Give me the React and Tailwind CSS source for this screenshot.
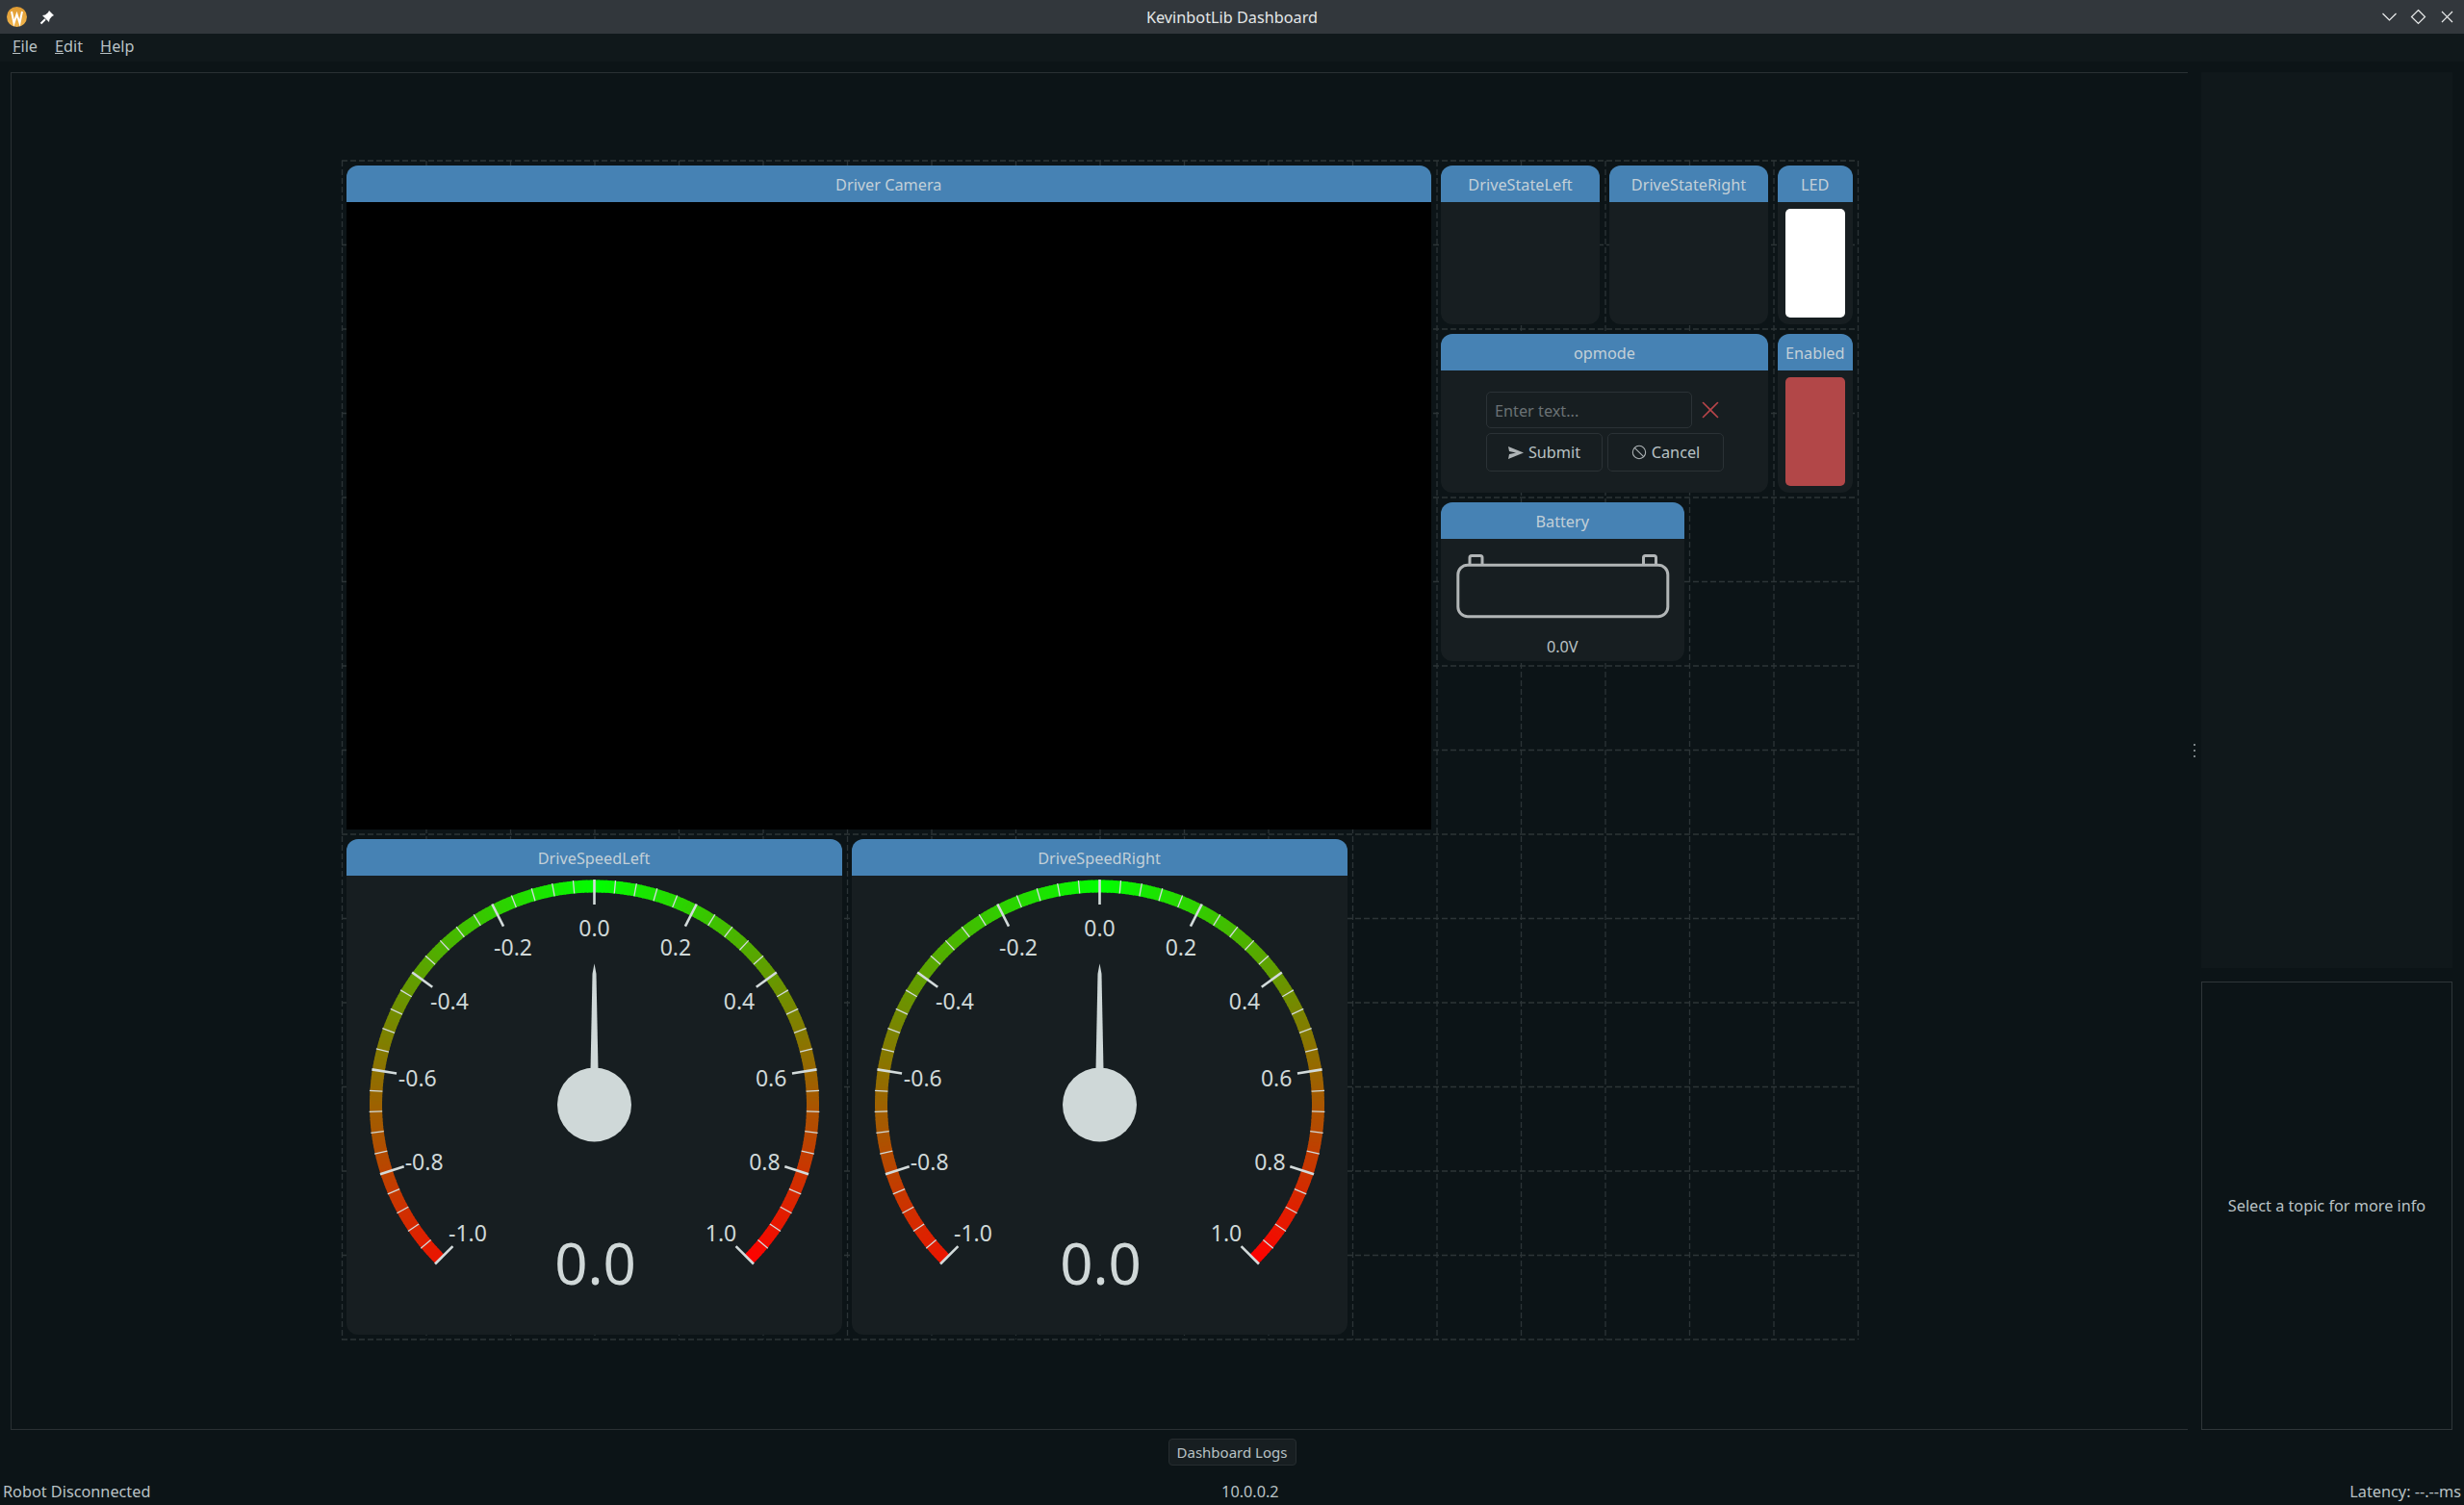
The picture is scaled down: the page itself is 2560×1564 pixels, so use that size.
import React from "react";
import { X, Ban } from "lucide-react";

const CELL = 87.5;

function GridLines() {
  const v = Array.from({ length: 19 }, (_, i) => i);
  const h = Array.from({ length: 15 }, (_, i) => i);
  return (
    <svg className="absolute left-0 top-0 overflow-visible" width="1575" height="1225">
      {v.map((i) => (
        <line key={"v" + i} x1={i * CELL + 0.5} x2={i * CELL + 0.5} y1="0" y2="1225" stroke="#2c3437" strokeWidth="1.3" strokeDasharray="6 3" />
      ))}
      {h.map((i) => (
        <line key={"h" + i} y1={i * CELL} y2={i * CELL} x1="0" x2="1575" stroke="#2c3437" strokeWidth="1.3" strokeDasharray="6 3" />
      ))}
    </svg>
  );
}

function Widget({ title, className, bodyClass = "", square = false, children }) {
  return (
    <div className={`relative m-[5px] flex min-w-0 flex-col overflow-hidden bg-[#171e21] ${square ? "rounded-t-[12px]" : "rounded-[12px]"} ${className}`}>
      <div className="flex h-[38px] shrink-0 items-center justify-center bg-[#4682b4] pt-[2px] text-[#c3d0d8]">{title}</div>
      <div className={`min-h-0 flex-1 ${bodyClass}`}>{children}</div>
    </div>
  );
}

const CX = 257.5;
const CY = 238;

function polar(r, deg) {
  const a = (deg * Math.PI) / 180;
  return [CX + r * Math.sin(a), CY - r * Math.cos(a)];
}

function arcColor(deg) {
  const v = deg / 135;
  const t = v < 0 ? Math.min(1, -v * 0.91 + 0.005) : v;
  const r = Math.round(255 * t);
  const g = Math.round(255 * (1 - t));
  return `rgb(${r},${g},0)`;
}

function Gauge() {
  const segs = [];
  for (let d = -135; d < 135; d += 1) {
    const [x1, y1] = polar(227, d);
    const [x2, y2] = polar(227, Math.min(135, d + 1.25));
    segs.push(<path key={d} d={`M${x1} ${y1} L${x2} ${y2}`} stroke={arcColor(d)} strokeWidth="13" fill="none" />);
  }
  const ticks = [];
  for (let i = -25; i <= 25; i += 1) {
    const d = (i * 135) / 25;
    const major = i % 5 === 0;
    const [x1, y1] = polar(234, d);
    const [x2, y2] = polar(major ? 208 : 220.5, d);
    ticks.push(<line key={i} x1={x1} y1={y1} x2={x2} y2={y2} stroke="#d3dbdb" strokeWidth={major ? 2.6 : 1.3} />);
  }
  const labels = [-1, -0.8, -0.6, -0.4, -0.2, 0, 0.2, 0.4, 0.6, 0.8, 1].map((v) => {
    const [x, y] = polar(186, v * 135);
    return (
      <text key={v} x={x} y={y + 10.5} textAnchor="middle" fontSize="23" fill="#cfd8d8">
        {v.toFixed(1)}
      </text>
    );
  });
  return (
    <svg width="515" height="477" className="block">
      {segs}
      {ticks}
      {labels}
      <polygon points="257.5,91.5 259.5,102 261.5,202 253.5,202 255.5,102" fill="#cfd8d8" />
      <circle cx={CX} cy={CY} r="38.5" fill="#cfd8d8" />
      <text x="258.6" y="425" textAnchor="middle" fontSize="60" fill="#d0d8d8">
        0.0
      </text>
    </svg>
  );
}

function Battery() {
  return (
    <svg width="253" height="95" className="block">
      <rect x="30" y="17.5" width="13" height="12" rx="2" fill="none" stroke="#b1b5b6" strokeWidth="3" />
      <rect x="210.5" y="17.5" width="13" height="12" rx="2" fill="none" stroke="#b1b5b6" strokeWidth="3" />
      <rect x="17.8" y="27.2" width="218" height="53.5" rx="10" fill="#171e21" stroke="#b1b5b6" strokeWidth="3" />
    </svg>
  );
}

export default function App() {
  return (
    <div className="flex h-[1564px] w-[2560px] flex-col overflow-hidden bg-[#0c1417] font-['Noto_Sans',sans-serif] text-[16.25px] text-[#b9c2c5]">
      {/* title bar */}
      <div className="relative flex h-[35px] shrink-0 items-center justify-center bg-[#32373c] pt-[1px] text-[#e4e7e8]">
        <div className="absolute left-[7px] top-[7px] flex items-center gap-[13px]">
          <svg width="21" height="21" viewBox="0 0 21 21">
            <defs>
              <linearGradient id="wl" x1="0" y1="0" x2="0" y2="1">
                <stop offset="0" stopColor="#e09b32" />
                <stop offset="1" stopColor="#f0b54e" />
              </linearGradient>
            </defs>
            <circle cx="10.5" cy="10.5" r="10.5" fill="url(#wl)" />
            <path d="M5 5 L7.5 17 L10.5 8 L13.5 17 L16 5" fill="none" stroke="#fff" strokeWidth="2" />
          </svg>
          <svg width="16" height="16" viewBox="0 0 16 16">
            <path d="M10 1 L15 6 L13 7 L10.5 10 L10 13 L3 6 L6 5.5 L9 3 Z" fill="#fff" />
            <path d="M6 10 L1.5 14.5" stroke="#fff" strokeWidth="2" />
          </svg>
        </div>
        <span>KevinbotLib Dashboard</span>
        <div className="absolute right-[8px] top-[8px] flex items-center gap-[11px]">
          <svg width="19" height="19" viewBox="0 0 19 19">
            <path d="M2.5 6 L9.5 13 L16.5 6" fill="none" stroke="#eceeee" strokeWidth="1.2" />
          </svg>
          <svg width="19" height="19" viewBox="0 0 19 19">
            <path d="M9.5 2.5 L16.5 9.5 L9.5 16.5 L2.5 9.5 Z" fill="none" stroke="#eceeee" strokeWidth="1.2" />
          </svg>
          <svg width="19" height="19" viewBox="0 0 19 19">
            <path d="M4 4 L15 15 M15 4 L4 15" fill="none" stroke="#eceeee" strokeWidth="1.2" />
          </svg>
        </div>
      </div>

      {/* menu bar */}
      <div className="flex h-[29px] shrink-0 items-center gap-[18px] bg-[#10181b] pb-[3px] pl-[13px]">
        <span><span className="underline">F</span>ile</span>
        <span><span className="underline">E</span>dit</span>
        <span><span className="underline">H</span>elp</span>
      </div>

      {/* content */}
      <div className="flex min-h-0 flex-1 pl-[11px] pt-[11px]">
        <div className="h-[1411px] w-[2262px] shrink-0 border-y border-l border-[#2a3033] pl-[342.5px] pt-[91px]">
          <div className="relative grid grid-cols-[repeat(18,87.5px)] grid-rows-[repeat(14,87.5px)]">
            <GridLines />
            <Widget title="Driver Camera" square className="col-start-1 col-span-13 row-start-1 row-span-8" bodyClass="bg-black" />
            <Widget title="DriveStateLeft" className="col-start-14 col-span-2 row-start-1 row-span-2" />
            <Widget title="DriveStateRight" className="col-start-16 col-span-2 row-start-1 row-span-2" />
            <Widget title="LED" className="col-start-18 col-span-1 row-start-1 row-span-2" bodyClass="flex px-[8px] pb-[7px] pt-[7px]">
              <div className="flex-1 rounded-[5px] bg-white" />
            </Widget>
            <Widget title="opmode" className="col-start-14 col-span-4 row-start-3 row-span-2" bodyClass="pl-[47px] pt-[22px]">
              <div className="flex items-center">
                <input
                  placeholder="Enter text..."
                  readOnly
                  className="h-[38px] w-[214px] rounded-[5px] border border-[#2b3236] bg-transparent pl-[8px] pt-[1px] outline-none placeholder:text-[#6a7174]"
                />
                <X size={30} strokeWidth={1.3} className="ml-[4px] text-[#b8454a]" />
              </div>
              <div className="mt-[5px] flex gap-[5px]">
                <button className="flex h-[40px] w-[121px] items-center justify-center gap-[5px] rounded-[5px] border border-[#2b3236]">
                  <svg width="16" height="13" viewBox="0 0 16 13">
                    <path d="M0 0 L16 6.5 L0 13 L1 8 L8 6.5 L1 5 Z" fill="#aeb4b6" />
                  </svg>
                  Submit
                </button>
                <button className="flex h-[40px] w-[121px] items-center justify-center gap-[5px] rounded-[5px] border border-[#2b3236]">
                  <Ban size={16} strokeWidth={1.6} className="text-[#aeb4b6]" />
                  Cancel
                </button>
              </div>
            </Widget>
            <Widget title="Enabled" className="col-start-18 col-span-1 row-start-3 row-span-2" bodyClass="flex px-[8px] pb-[7px] pt-[7px]">
              <div className="flex-1 rounded-[5px] bg-[#b24748]" />
            </Widget>
            <Widget title="Battery" className="col-start-14 col-span-3 row-start-5 row-span-2" bodyClass="flex flex-col items-center">
              <Battery />
              <span className="mt-[6px] leading-[22px]">0.0V</span>
            </Widget>
            <Widget title="DriveSpeedLeft" className="col-start-1 col-span-6 row-start-9 row-span-6">
              <Gauge />
            </Widget>
            <Widget title="DriveSpeedRight" className="col-start-7 col-span-6 row-start-9 row-span-6">
              <Gauge />
            </Widget>
          </div>
        </div>

        {/* splitter */}
        <div className="flex h-[1410px] w-[14px] shrink-0 flex-col items-center justify-center gap-[4px]">
          <div className="h-[2px] w-[2px] bg-[#7a8285]" />
          <div className="h-[2px] w-[2px] bg-[#7a8285]" />
          <div className="h-[2px] w-[2px] bg-[#7a8285]" />
        </div>

        {/* right column */}
        <div className="flex h-[1411px] w-[261px] shrink-0 flex-col gap-[14px]">
          <div className="h-[931px] bg-[#10181b]" />
          <div className="flex flex-1 items-center justify-center border border-[#2f3639]">Select a topic for more info</div>
        </div>
      </div>

      {/* logs button */}
      <div className="flex h-[38px] shrink-0 items-start justify-center pt-[9px]">
        <button className="flex h-[28px] w-[133px] items-center justify-center rounded-[4px] border border-[#262d30] bg-[#171e21] text-[15px]">
          Dashboard Logs
        </button>
      </div>

      {/* status bar */}
      <div className="flex h-[40px] shrink-0 items-start justify-between px-[3px] pt-[15px] leading-[22px]">
        <span>Robot Disconnected</span>
        <span>10.0.0.2</span>
        <span>Latency: --.--ms</span>
      </div>
    </div>
  );
}
